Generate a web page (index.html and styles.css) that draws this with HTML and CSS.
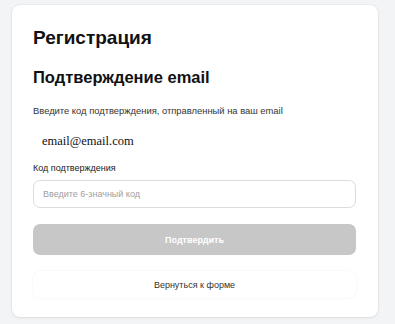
FILE: index.html
```
<!DOCTYPE html>
<html lang="ru">

<head>
    <meta charset="UTF-8">
    <meta name="viewport" content="width=device-width, initial-scale=1.0">
    <title>Регистрация</title>
    <link rel="stylesheet" href="styles.css">
</head>

<body>
    <div class="card">
        <h1 class="card-title">Регистрация</h1>
        <h2 class="card-subtitle">Подтверждение email</h2>

        <p class="hint">Введите код подтверждения, отправленный на ваш email</p>
        <div class="email">email@email.com</div>

        <div class="form-group">
            <label for="code">Код подтверждения</label>
            <input type="text" id="code" placeholder="Введите 6-значный код">
        </div>

        <button class="confirm-btn" disabled>Подтвердить</button>
        <button class="back-btn">Вернуться к форме</button>
    </div>
</body>

</html>
```

FILE: styles.css
```
* {
    margin: 0;
    padding: 0;
    box-sizing: border-box;
    font-family: 'Liberation Sans', Arial, sans-serif;
}

body {
    background: #f3f4f6;
    padding: 5px 17px 8px 12px;
    min-height: 100vh;
}

.card {
    background: #fff;
    border-radius: 8px;
    box-shadow: 0 0 2px rgba(0, 0, 0, 0.12), 0 1px 3px rgba(0, 0, 0, 0.06);
    padding: 21px 22px 19px 21px;
}

.card-title {
    font-size: 19px;
    font-weight: bold;
    color: #111;
    line-height: 24px;
}

.card-subtitle {
    font-size: 16.5px;
    font-weight: bold;
    color: #111;
    line-height: 20px;
    margin-top: 17px;
}

.hint {
    font-size: 9.4px;
    color: #333;
    margin-top: 18px;
    line-height: 12px;
}

.email {
    font-family: 'Liberation Serif', 'Times New Roman', serif;
    font-size: 12.5px;
    color: #111;
    padding-left: 9px;
    margin-top: 16px;
    line-height: 16px;
}

.form-group {
    margin-top: 13px;
}

.form-group label {
    display: block;
    font-size: 9px;
    color: #222;
    line-height: 12px;
    margin-bottom: 6px;
}

.form-group input {
    width: 100%;
    height: 28px;
    padding: 0 9px;
    border: 1px solid #dcdcdc;
    border-radius: 7px;
    font-size: 9px;
    color: #333;
    background: #fff;
}

.form-group input::placeholder {
    color: #a0a0a0;
}

button {
    display: block;
    width: 100%;
    border: none;
    border-radius: 7px;
    font-size: 9px;
    cursor: pointer;
}

.confirm-btn {
    margin-top: 16px;
    height: 31px;
    background: #c7c7c7;
    color: #fff;
    font-weight: bold;
}

.back-btn {
    margin-top: 16px;
    height: 27px;
    background: #fff;
    color: #333;
    box-shadow: 0 0 2px rgba(0, 0, 0, 0.08);
}
```
